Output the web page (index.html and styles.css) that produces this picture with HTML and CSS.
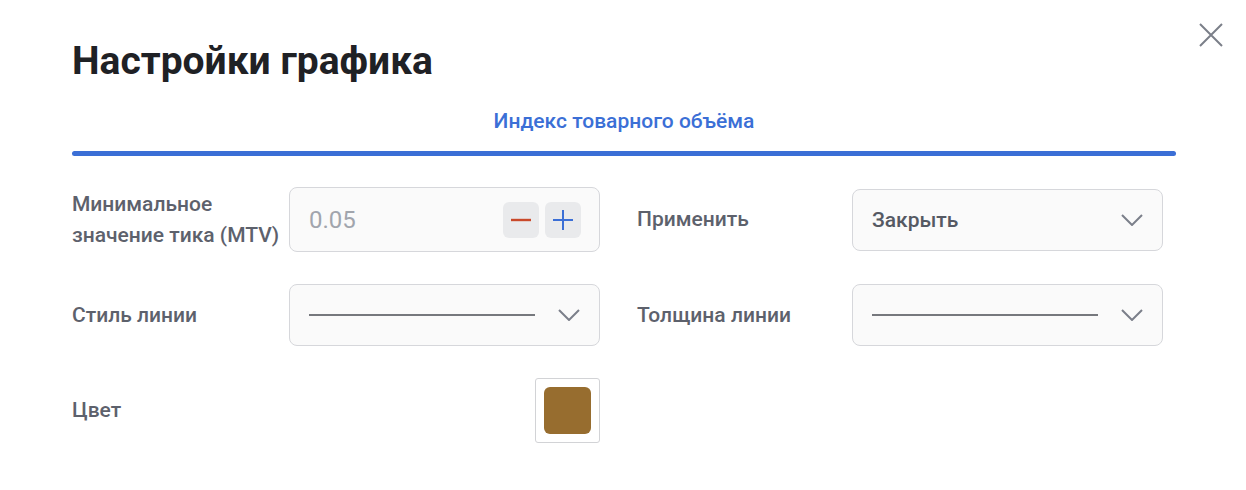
FILE: index.html
```html
<!DOCTYPE html>
<html lang="ru">
<head>
<meta charset="utf-8">
<title>Настройки графика</title>
<link rel="stylesheet" href="styles.css">
</head>
<body>
<div class="dialog">
  <button class="close" aria-label="Закрыть">
    <svg width="26" height="26" viewBox="0 0 26 26"><path d="M2 2 L24 24 M24 2 L2 24" stroke="#7b7f89" stroke-width="2" fill="none"/></svg>
  </button>
  <h1 class="title">Настройки графика</h1>
  <div class="tabs">
    <div class="tab">Индекс товарного объёма</div>
    <div class="tab-bar"></div>
  </div>
  <div class="form">
    <div class="field">
      <div class="label">Минимальное значение тика (MTV)</div>
      <div class="control stepper">
        <span class="value">0.05</span>
        <div class="steps">
          <span class="step"><svg width="20" height="20" viewBox="0 0 20 20"><path d="M0 10 H20" stroke="#c9492a" stroke-width="2.4"/></svg></span>
          <span class="step"><svg width="20" height="20" viewBox="0 0 20 20"><path d="M0 10 H20 M10 0 V20" stroke="#3b6fd6" stroke-width="2"/></svg></span>
        </div>
      </div>
    </div>
    <div class="field">
      <div class="label">Применить</div>
      <div class="control select">
        <span class="sel-text">Закрыть</span>
        <svg class="chev" width="22" height="12" viewBox="0 0 22 12"><path d="M1 1 L11 11 L21 1" stroke="#7b7f8a" stroke-width="2" fill="none"/></svg>
      </div>
    </div>
    <div class="field">
      <div class="label">Стиль линии</div>
      <div class="control select">
        <span class="line"></span>
        <svg class="chev" width="22" height="12" viewBox="0 0 22 12"><path d="M1 1 L11 11 L21 1" stroke="#7b7f8a" stroke-width="2" fill="none"/></svg>
      </div>
    </div>
    <div class="field">
      <div class="label">Толщина линии</div>
      <div class="control select">
        <span class="line"></span>
        <svg class="chev" width="22" height="12" viewBox="0 0 22 12"><path d="M1 1 L11 11 L21 1" stroke="#7b7f8a" stroke-width="2" fill="none"/></svg>
      </div>
    </div>
    <div class="field">
      <div class="label">Цвет</div>
      <div class="swatch-cell">
        <div class="swatch"><span class="swatch-fill"></span></div>
      </div>
    </div>
  </div>
</div>
</body>
</html>
```
FILE: styles.css
```css
* { box-sizing: border-box; }
html, body { margin: 0; background: #ffffff; }
body { font-family: Roboto, "Noto Sans", sans-serif; }

.dialog {
  position: relative;
  width: 1246px;
  height: 490px;
  padding: 37px 70px 0 72px;
}

.close {
  position: absolute;
  top: 22px;
  right: 22px;
  width: 26px;
  height: 26px;
  padding: 0;
  border: 0;
  background: none;
  cursor: pointer;
}
.close svg { display: block; }

.title {
  margin: 0;
  font-size: 39px;
  line-height: 48px;
  font-weight: 700;
  color: #1f2125;
}

.tabs {
  margin-top: 23px;
  display: flex;
  flex-direction: column;
  align-items: center;
}
.tab {
  font-size: 21px;
  line-height: 26px;
  font-weight: 500;
  color: #3b6fd6;
}
.tab-bar {
  margin-top: 17px;
  width: 100%;
  height: 5px;
  border-radius: 3px;
  background: #3b6fd6;
}

.form {
  margin-top: 31px;
  display: grid;
  grid-template-columns: 528px 528px;
  column-gap: 37px;
  row-gap: 32px;
}

.field {
  display: grid;
  grid-template-columns: 217px 311px;
  align-items: center;
}
.field:nth-child(even) { grid-template-columns: 215px 311px; }

.label {
  font-size: 21px;
  line-height: 31px;
  font-weight: 500;
  color: #5d616c;
  padding-right: 6px;
}

.control {
  display: flex;
  align-items: center;
  border: 1px solid #d6d7db;
  border-radius: 8px;
  background: #fafafa;
}

.stepper {
  height: 65px;
  padding: 0 18px 0 19px;
  justify-content: space-between;
}
.value {
  font-size: 24px;
  color: #a1a5ad;
}
.steps { display: flex; gap: 6px; }
.step {
  width: 36px;
  height: 36px;
  border-radius: 6px;
  background: #e9eaec;
  display: flex;
  align-items: center;
  justify-content: center;
}

.select {
  height: 62px;
  padding: 0 18px 0 19px;
  justify-content: space-between;
}
.sel-text {
  font-size: 21px;
  font-weight: 500;
  color: #555963;
}
.line {
  width: 226px;
  height: 2px;
  background: #76787d;
}
.chev { display: block; margin-right: 1px; }

.swatch-cell {
  display: flex;
  justify-content: flex-end;
}
.swatch {
  width: 65px;
  height: 65px;
  border: 1px solid #d2d3d6;
  border-radius: 3px;
  padding: 8px;
  background: #fff;
}
.swatch-fill {
  display: block;
  width: 100%;
  height: 100%;
  border-radius: 6px;
  background: #976d2f;
}
```
